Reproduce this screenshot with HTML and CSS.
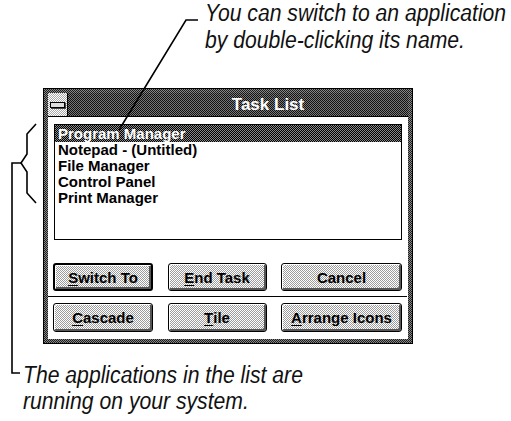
FILE: index.html
```html
<!DOCTYPE html>
<html>
<head>
<meta charset="utf-8">
<link rel="stylesheet" href="styles.css">
</head>
<body>
<div class="page">
  <p class="note note-top"><span class="narrow">You can switch to an application<br>by double-clicking its name.</span></p>

  <div class="window">
    <div class="titlebar">
      <div class="sysmenu"><span class="sysbar"></span></div>
      <div class="title">Task List</div>
    </div>
    <div class="client">
      <ul class="listbox">
        <li class="item selected">Program Manager</li>
        <li class="item">Notepad - (Untitled)</li>
        <li class="item">File Manager</li>
        <li class="item">Control Panel</li>
        <li class="item">Print Manager</li>
      </ul>
      <div class="btnrow">
        <div class="btn default"><u>S</u>witch To</div>
        <div class="btn"><u>E</u>nd Task</div>
        <div class="btn">Cancel</div>
      </div>
      <div class="divider"></div>
      <div class="btnrow">
        <div class="btn"><u>C</u>ascade</div>
        <div class="btn"><u>T</u>ile</div>
        <div class="btn"><u>A</u>rrange Icons</div>
      </div>
    </div>
  </div>

  <p class="note note-bottom"><span class="narrow">The applications in the list are<br>running on your system.</span></p>

  <svg class="leaders" width="511" height="421" viewBox="0 0 511 421">
    <polyline points="198,20 186,20 119,130" />
    <polyline points="36,124 27,134 27,154 21,163 27,172 27,193 36,203" />
    <polyline points="21,163 12,163 12,373 20,373" />
  </svg>
</div>
</body>
</html>
```

FILE: styles.css
```css
html, body {
  margin: 0;
  padding: 0;
  background: #fff;
}

.page {
  position: relative;
  width: 511px;
  height: 421px;
  overflow: hidden;
  font-family: "Liberation Sans", Arial, sans-serif;
}

.note {
  margin: 0;
  font-family: "Liberation Sans", Arial, sans-serif;
  font-style: italic;
  font-size: 23px;
  line-height: 27px;
  color: #111;
  white-space: nowrap;
}

.narrow {
  display: inline-block;
  transform: scaleX(0.92);
  transform-origin: 0 0;
}

.note-top {
  padding-left: 205px;
}

.note-bottom {
  margin-top: 18px;
  padding-left: 23px;
  line-height: 26px;
}

.window {
  margin-top: 34px;
  margin-left: 43px;
  width: 370px;
  height: 256px;
  box-sizing: border-box;
  border: 1px solid #000;
  padding: 4px;
  background: repeating-conic-gradient(#1c1c1c 0 25%, #888 0 50%) 0 0 / 2px 2px;
  display: flex;
  flex-direction: column;
}

.titlebar {
  height: 24px;
  display: flex;
  background: repeating-conic-gradient(#111 0 25%, #777 0 50%) 0 0 / 2px 2px;
  border-bottom: 1px solid #000;
  box-sizing: border-box;
}

.sysmenu {
  width: 19px;
  border-right: 1px solid #000;
  background: repeating-conic-gradient(#fff 0 25%, #a8a8a8 0 50%) 0 0 / 2px 2px;
  display: flex;
  align-items: center;
  justify-content: center;
}

.sysbar {
  display: block;
  width: 13px;
  height: 4px;
  border: 1px solid #000;
  background: #ddd;
  box-shadow: 1px 1px 0 #444;
}

.title {
  flex: 1;
  text-align: center;
  color: #fff;
  font-weight: bold;
  font-size: 17px;
  line-height: 23px;
  padding-left: 60px;
}

.client {
  flex: 1;
  background: #fff;
  padding: 7px 6px 7px 5px;
  display: flex;
  flex-direction: column;
}

.listbox {
  list-style: none;
  margin: 0 0 23px 1px;
  padding: 0;
  height: 116px;
  box-sizing: border-box;
  border: 1px solid #000;
  background: #fff;
}

.item {
  height: 16px;
  line-height: 16px;
  padding-left: 3px;
  font-weight: bold;
  font-size: 15px;
  color: #000;
  white-space: nowrap;
}

.item.selected {
  height: 17px;
  line-height: 17px;
  color: #fff;
  background: repeating-conic-gradient(#000 0 25%, #8a8a8a 0 50%) 0 0 / 2px 2px;
}

.btnrow {
  display: grid;
  grid-template-columns: 100px 99px 121px;
  justify-content: space-between;
  height: 28px;
}

.btnrow + .divider + .btnrow {
  height: 29px;
}

.divider {
  height: 1px;
  background: #000;
  margin: 5px -5px 6px -5px;
}

.btn {
  box-sizing: border-box;
  border: 1px solid #000;
  border-radius: 3px;
  background: repeating-conic-gradient(#fff 0 25%, #9c9c9c 0 50%) 0 0 / 2px 2px;
  box-shadow: inset 1px 1px 0 #fff, inset -2px -2px 0 #555;
  display: flex;
  align-items: center;
  justify-content: center;
  font-weight: bold;
  font-size: 15px;
  color: #000;
  white-space: nowrap;
}

.btn.default {
  border-width: 2px;
}

.btn u {
  text-decoration-thickness: 1px;
  text-underline-offset: 2px;
}

.leaders {
  position: absolute;
  left: 0;
  top: 0;
  pointer-events: none;
}

.leaders polyline {
  fill: none;
  stroke: #000;
  stroke-width: 1.6;
}
```
